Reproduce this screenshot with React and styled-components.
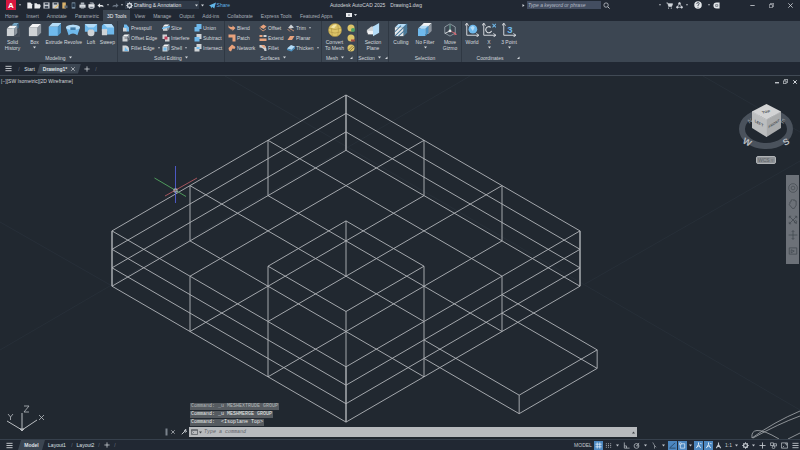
// src/App.jsx
import React from 'react';
import styled, { createGlobalStyle } from 'styled-components';

const GlobalStyle = createGlobalStyle`
  * {
    box-sizing: border-box;
  }

  body {
    margin: 0;
    background: #212830;
    color: #d3d7dc;
    font-family: "Liberation Sans", Arial, sans-serif;
    font-size: 5px;
    line-height: 6px;
  }

  button, input, select {
    margin: 0;
    padding: 0;
    border: 0;
    background: none;
    color: inherit;
    font: inherit;
  }

  svg {
    display: block;
    flex: none;
  }
`;

const BLUE = '#6fb9ec';
const PALE = '#b4dcf7';
const GREY = '#cfd3d6';
const DARK = '#8d959e';
const ORANGE = '#e8a27c';
const GOLD = '#dcc468';

/* ---------- icons ---------- */

const Svg = ({ size = 8, w, h, box = '0 0 16 16', children, ...rest }) => (
  <svg width={w || size} height={h || size} viewBox={box} fill="none" stroke="currentColor" strokeWidth="1.6" aria-hidden="true" {...rest}>
    {children}
  </svg>
);

const Caret = ({ size = 3 }) => (
  <Svg size={size} box="0 0 6 6" stroke="none"><path d="M0 1h6L3 5z" fill="currentColor" /></Svg>
);

const Launcher = () => (
  <Svg size={3} box="0 0 6 6" stroke="none"><path d="M0 6h5V1z" fill="currentColor" /></Svg>
);

const Cube = ({ x = 0, y = 0, s = 1, top = '#f2f3f4', left = GREY, right = DARK }) => (
  <g transform={`translate(${x} ${y}) scale(${s})`} stroke="none">
    <path d="M0 4L4 0H14L10 4z" fill={top} />
    <path d="M0 4H10V14H0z" fill={left} />
    <path d="M10 4L14 0V10L10 14z" fill={right} />
  </g>
);

const big = {
  history: (
    <>
      <Cube x={7} y={0} s={0.55} top="#76a9c9" left="#51809f" right="#38617f" />
      <Cube x={1} y={3} s={0.85} />
      <path d="M13 7h2v8H9" stroke="#4b525c" />
    </>
  ),
  box: <Cube x={1} y={1} />,
  extrude: <Cube x={2} y={0} s={1.05} top={PALE} left={BLUE} right="#4b91c2" />,
  revolve: (
    <g stroke="none">
      <path d="M0 5Q8 -1 16 5L13 14Q8 10 3 14z" fill={BLUE} />
      <ellipse cx="8" cy="5" rx="8" ry="3" fill={PALE} />
      <path d="M5 5h6v3H5z" fill="#437fab" />
    </g>
  ),
  loft: (
    <g stroke="none">
      <path d="M1 1h14v9h-4L8 7l-3 3H1z" fill={BLUE} />
      <path d="M1 1h14l-4 4H5z" fill={PALE} />
      <circle cx="8" cy="11" r="4" fill={GREY} />
    </g>
  ),
  sweep: (
    <g stroke="none">
      <path d="M3 1h9l3 4v8H7V9H1V3z" fill={BLUE} />
      <path d="M3 1h9l3 4H7L5 3z" fill={PALE} />
      <path d="M1 7h6v7H1z" fill={GREY} />
    </g>
  ),
  mesh: (
    <g stroke="#a98f42" strokeWidth=".6">
      <circle cx="8" cy="8" r="7.5" fill={GOLD} />
      <path d="M1 6Q8 9 15 6M1 10Q8 13 15 10M5 1Q3 8 5 15M11 1Q13 8 11 15" />
      <path d="M3 5Q6 1 10 2L7 6z" fill="#f3e6a6" stroke="none" />
    </g>
  ),
  section: (
    <g stroke="none">
      <path d="M1 8L6 4h5v7H1z" fill={GREY} />
      <path d="M8 4L15 0V11L8 15z" fill={PALE} />
      <path d="M2 9h6v4H2z" fill="#f2f3f4" />
    </g>
  ),
  culling: (
    <>
      <Cube x={1} y={1} top={PALE} left="#e6e9eb" right="#4c7a99" />
      <path d="M1 15L15 1M1 10L8 3M5 15L15 6" stroke="#487a9c" strokeWidth="1.2" />
    </>
  ),
  filter: (
    <>
      <Cube x={3} y={0} s={0.9} />
      <Cube x={0} y={3} s={0.85} top={PALE} left={BLUE} right="#4b91c2" />
    </>
  ),
  gizmo: (
    <g strokeWidth="1">
      <path d="M8 1L14 4.500V11.500L8 15L2 11.500V4.500z" stroke="#95a0a9" />
      <path d="M8 9V2" stroke="#77bfa8" />
      <path d="M8 9L2 12" stroke="#e5e7e9" />
      <path d="M8 9L14 12" stroke="#d36b75" />
      <circle cx="8" cy="9" r="1.600" fill="#e5e7e9" stroke="none" />
      <path d="M13 10l3 3-3 1z" fill="#d36b75" stroke="none" />
    </g>
  ),
  world: (
    <>
      <path d="M2 1V14H15M0 3L2 0l2 3M13 12l3 2-3 2" strokeWidth="1.100" />
      <circle cx="9" cy="7" r="5" fill={BLUE} stroke="none" />
      <path d="M6 5l3-2 2 2-2 4z" fill={PALE} stroke="none" />
    </>
  ),
  ucsX: (
    <>
      <path d="M2 1V14H15M0 3L2 0l2 3M13 12l3 2-3 2" strokeWidth="1.100" />
      <path d="M11 9a3.500 3.500 0 1 1-1-4" strokeWidth="1.300" />
      <path d="M12 1l4 4M16 1l-4 4" stroke={BLUE} strokeWidth="1.200" />
    </>
  ),
  point3: (
    <>
      <path d="M2 1V14H15M0 3L2 0l2 3M13 12l3 2-3 2" strokeWidth="1.100" />
      <text x="6" y="11" fontSize="11" fontWeight="bold" fill={BLUE} stroke="none">3</text>
    </>
  ),
};

const small = {
  press: <><path d="M2 7h8v8H2z" fill={GREY} stroke="none" /><path d="M4 1h5l5 6v8H9V8H4z" fill={BLUE} stroke="none" /></>,
  offset: <><Cube x={1} y={1} /><path d="M5 8h8v6" stroke="#4b525c" /></>,
  filletE: <><path d="M1 3h7q6 1 6 7v5H1z" fill={GREY} stroke="none" /><path d="M6 6l7 8H5z" fill={BLUE} stroke="none" /></>,
  slice: <><Cube x={2} y={1} s={0.9} /><path d="M0 9L16 5" stroke={BLUE} strokeWidth="3" /></>,
  interfere: <><path d="M1 1h9v9H1zM6 6h9v9H6z" fill={GREY} stroke="none" /><path d="M5 5h6v6H5z" fill="#c3415c" stroke="none" /></>,
  shell: <><Cube x={1} y={1} /><path d="M3 7h6v6H3z" fill={BLUE} stroke="none" /></>,
  union: <path d="M5 0h10v10h-4v5H1V6h4z" fill={BLUE} stroke="none" />,
  subtract: <><path d="M5 0h10v10H5z" fill={GREY} stroke="none" /><path d="M1 6h10v9H1z" fill={BLUE} stroke="none" /></>,
  intersect: <><path d="M5 0h10v10H5zM1 6h10v9H1z" fill={GREY} stroke="none" /><path d="M5 6h6v4H5z" fill={BLUE} stroke="none" /></>,
  blend: <path d="M1 1q0 5 6 5h2V3l6 5-6 6v-3H6L1 7z" fill={ORANGE} stroke="none" />,
  patch: <path d="M1 1h14v14h-6V7H1z" fill={ORANGE} stroke="none" />,
  network: <path d="M1 8L8 1l7 5-2 4-4-1-3 6-4-2z" fill={ORANGE} stroke="none" />,
  offsetS: <><path d="M2 6l7-5 6 4-6 5z" fill={ORANGE} stroke="none" /><path d="M1 8l7 6 6-4" stroke={ORANGE} /></>,
  extend: <><path d="M1 2h6v4H1zM1 9h14v5H1z" fill={ORANGE} stroke="none" /><path d="M9 2h6v4H9z" fill={GREY} stroke="none" /></>,
  fillet: <><path d="M1 2h8q6 1 6 12h-4Q10 7 1 7z" fill={GREY} stroke="none" /><path d="M4 2h5q4 1 5 5l-4 1z" fill={ORANGE} stroke="none" /></>,
  trim: <><path d="M2 8l6-7 6 6-6 2z" fill={GREY} stroke="none" /><path d="M1 10l5 5M5 9l9 5" stroke={ORANGE} /></>,
  planar: <path d="M1 12L6 4h9l-5 8z" fill={ORANGE} stroke="none" />,
  thicken: <><path d="M0 9l8-7 8 3-7 7z" fill={PALE} stroke="none" /><path d="M0 9l9 3 7-7v4l-7 6-9-3z" fill="#4b91c2" stroke="none" /></>,
  more: <><circle cx="8" cy="8" r="7" fill={GOLD} stroke="none" /><circle cx="12" cy="12" r="4" fill="#4e9f63" stroke="none" /></>,
  less: <><circle cx="8" cy="8" r="7" fill={GOLD} stroke="none" /><path d="M8 11h8v4H8z" fill="#a34b42" stroke="none" /></>,
  refine: <><circle cx="8" cy="8" r="7" fill={GOLD} stroke="none" /><path d="M3 12L12 3M6 14l8-8" stroke="#7b6b3b" strokeWidth="1.500" /></>,
};

const quick = {
  new: <path d="M3 1h7l4 4v10H3z" fill="#e9ebee" stroke="none" />,
  open: <path d="M1 3h5l2 2h6v3h2l-3 7H1z" fill="#e9ebee" stroke="none" />,
  save: <><path d="M1 1h14v14H1z" fill="#c9ced4" stroke="none" /><path d="M4 2h8v4H4zM4 9h8v5H4z" fill="#46505e" stroke="none" /></>,
  saveAs: <><path d="M1 1h14v14H1z" fill="#c9ced4" stroke="none" /><path d="M4 2h8v4H4z" fill="#46505e" stroke="none" /><path d="M6 14l9-8" stroke="#e4bd68" strokeWidth="3" /></>,
  web: <><path d="M3 1h8v14H3z" fill="#d9b26b" stroke="none" /><path d="M8 8h7v6H8z" fill="#5c6774" stroke="none" /></>,
  mobile: <><path d="M4 1h8v14H4z" fill="#8ba2b5" stroke="none" /><path d="M5 3h6v9H5z" fill="#243447" stroke="none" /></>,
  plot: <><path d="M1 6h14v7H1z" fill="#d9dde1" stroke="none" /><path d="M4 1h8v5H4zM4 10h8v5H4z" fill="#aab1b9" stroke="none" /></>,
  print: <><path d="M1 5h14v8H1z" fill="#e9ebee" stroke="none" /><path d="M4 2h8v3M4 10h8v5H4z" fill="#6d7682" /></>,
  undo: <path d="M1 8l6-5v4h4q4 0 4 5-2-2-4-2H7v3z" fill="#e9ebee" stroke="none" />,
  redo: <path d="M15 8L9 3v4H5q-4 0-4 5 2-2 4-2h4v3z" fill="#6b7684" stroke="none" />,
};

const status = {
  grid: <path d="M1 5h14M1 11h14M5 1v14M11 1v14" strokeWidth="1.800" />,
  snap: <path d="M2 4h12M2 8h12M2 12h12" strokeDasharray="2 3" strokeWidth="2" />,
  ortho: <path d="M3 1v13h12M3 9h5v5" />,
  polar: <><circle cx="8" cy="9" r="5.500" /><path d="M8 9l6-7M8 9h5" /></>,
  iso: <path d="M4 1l4 7v7M8 8l4 4" strokeWidth="1.300" />,
  track: <path d="M1 14h14M2 13L14 2" stroke="#20384f" />,
  osnap: <><path d="M3 4h10v10H3z" /><path d="M1 2h4v4H1z" fill="#2b5f95" /></>,
  annoA: <path d="M8 1v5L3 14M8 6l5 8M8 10H5M12 2l3 3" strokeWidth="2.200" />,
  anno: <path d="M8 1v5L3 14M8 6l5 8M7 10h2" strokeWidth="2.400" />,
  gear: <><circle cx="8" cy="8" r="4.500" strokeWidth="3" /><path d="M8 0v16M0 8h16M2.500 2.500l11 11M13.500 2.500l-11 11" strokeDasharray="3 10" /></>,
  plus: <path d="M8 1v14M1 8h14" strokeWidth="2" />,
  isolate: <><path d="M1 2h7v6H1zM9 4h6v5H9z" /><circle cx="8" cy="12" r="3" /></>,
  clean: <><path d="M1 2h14v12H1z" /><path d="M9 4h4v4M4 12l3-3" /></>,
  menu: <path d="M1 3h14M1 8h14M1 13h14" strokeWidth="2" />,
};

/* ---------- page ---------- */

const Page = styled.div`
  display: flex;
  flex-direction: column;
  min-height: 100vh;
  background: #212830;
`;

const IconButton = styled.button`
  display: flex;
  align-items: center;
  justify-content: center;
  width: ${({ $w }) => $w || 10}px;
  height: 9px;
`;

const TitleBar = styled.header`
  display: flex;
  align-items: center;
  height: 10px;
  background: #212833;
`;

const QuickAccess = styled.div`
  display: flex;
  align-items: center;
  width: 230px;
  padding-left: 6px;
`;

const Logo = styled.button`
  width: 10px;
  height: 10px;
  background: #d8173f;
  color: #fff;
  font-size: 8px;
  font-weight: bold;
  line-height: 9px;
`;

const Workspace = styled.label`
  display: flex;
  align-items: center;
  gap: 1px;
  width: 75px;
  height: 8px;
  padding: 0 1px;
  background: #303a48;

  select {
    flex: 1;
    height: 8px;
    appearance: none;
    color: #e1e4e8;
  }
`;

const Share = styled.button`
  display: flex;
  align-items: center;
  gap: 1px;
  margin-left: 2px;
  color: #62b5e8;
`;

const AppTitle = styled.h1`
  display: flex;
  flex: 1;
  justify-content: center;
  gap: 5px;
  margin: 0;
  font-size: 5px;
  font-weight: normal;
  white-space: nowrap;
`;

const Search = styled.form`
  display: flex;
  align-items: center;
  gap: 2px;
  width: 90px;

  input {
    width: 74px;
    height: 8px;
    padding: 0 1px;
    background: #434d60;
    font-style: italic;
  }

  input::placeholder {
    color: #b3bac5;
    opacity: 1;
  }
`;

const Account = styled.div`
  display: flex;
  align-items: center;
  width: 188px;
  padding-left: 43px;
`;

const WindowButtons = styled.div`
  display: flex;
  flex: 1;
  justify-content: flex-end;
`;

const Tabs = styled.nav`
  display: flex;
  align-items: stretch;
  height: 11px;
  padding-left: 1px;
  background: #212833;
`;

const Tab = styled.button`
  padding: 0 4px;
  color: ${({ $active }) => ($active ? '#eef0f2' : '#a9b0b9')};
  background: ${({ $active }) => ($active ? '#3c4652' : 'transparent')};
`;

const Ribbon = styled.section`
  display: flex;
  height: 41px;
  background: #3c4652;
`;

const Panel = styled.div`
  display: flex;
  flex-direction: column;
  width: ${({ $w }) => $w}px;
  border-right: 1px solid ${({ $last }) => ($last ? 'transparent' : '#2f3843')};
`;

const PanelTools = styled.div`
  display: grid;
  flex: 1;
  grid-template-columns: ${({ $cols }) => $cols};
  padding: 2px 0 0 ${({ $pad }) => $pad || 0}px;
`;

const PanelTitle = styled.div`
  display: flex;
  align-items: center;
  justify-content: center;
  gap: 3px;
  height: 8px;
  padding-bottom: 1px;

  svg:last-child {
    margin-left: ${({ $launch }) => $launch || 0}px;
  }
`;

const BigButton = styled.button`
  display: flex;
  flex-direction: column;
  align-items: center;
  gap: 1px;
  color: #d6dade;
  text-align: center;

  span {
    margin-top: 1px;
  }
`;

const SmallStack = styled.div`
  display: flex;
  flex-direction: column;
`;

const SmallButton = styled.button`
  display: flex;
  align-items: center;
  gap: 1px;
  height: 10px;
  color: #d6dade;
  white-space: nowrap;

  svg + svg {
    margin-left: 2px;
  }
`;

const FileTabs = styled.nav`
  display: flex;
  align-items: center;
  height: 14px;
  border-bottom: 1px solid #414a55;
  background: #212833;
`;

const FileTab = styled.button`
  display: flex;
  align-items: center;
  justify-content: center;
  gap: 4px;
  width: ${({ $w }) => $w}px;
  height: 10px;
  color: #dfe2e6;
  font-weight: ${({ $active }) => ($active ? 'bold' : 'normal')};
  background: ${({ $active }) => ($active ? '#3c4652' : 'transparent')};
  clip-path: ${({ $active }) => ($active ? 'polygon(3px 0, 100% 0, calc(100% - 3px) 100%, 0 100%)' : 'none')};
`;

const Slash = styled.span`
  width: ${({ $w }) => $w || 6}px;
  color: #6b7582;
  text-align: center;
`;

const Viewport = styled.main`
  position: relative;
  flex: 1;
  min-height: 300px;
  overflow: hidden;
`;

const Drawing = styled.svg`
  position: absolute;
  inset: 0;
  width: 100%;
  height: 100%;
`;

const ViewLabel = styled.div`
  position: absolute;
  top: 2px;
  left: 1px;
`;

const DocButtons = styled.div`
  position: absolute;
  top: 1px;
  right: 1px;
  display: flex;
`;

const Compass = styled.div`
  position: absolute;
  top: 26px;
  right: 6px;
  display: flex;
  flex-direction: column;
  align-items: center;
  gap: 6px;
`;

const Wcs = styled.button`
  width: 20px;
  height: 8px;
  border: 1px solid #b0b3b6;
  border-radius: 2px;
  background: #8e9296;
  color: #5d6267;
`;

const NavBar = styled.div`
  position: absolute;
  top: 99px;
  right: 1px;
  display: flex;
  flex-direction: column;
  align-items: center;
  justify-content: space-between;
  width: 13px;
  height: 89px;
  padding: 8px 0;
  background: #6c7178;
  color: #42484f;
`;

const CommandArea = styled.div`
  position: absolute;
  right: 163px;
  bottom: 2px;
  left: 165px;
`;

const History = styled.div`
  display: flex;
  flex-direction: column;
  align-items: flex-start;
  gap: 1px;
  margin: 0 0 1px 25px;
  font-family: "Liberation Mono", monospace;
`;

const HistoryLine = styled.div`
  height: 7px;
  padding: 0 1px;
  background: #565b60;
  color: ${({ $dim }) => ($dim ? '#b4b8bb' : '#e8eaeb')};
  white-space: pre;
`;

const CommandRow = styled.div`
  display: flex;
  align-items: center;
  height: 10px;
`;

const CommandBox = styled.label`
  display: flex;
  flex: 1;
  align-items: center;
  gap: 1px;
  height: 10px;
  padding: 0 2px;
  background: #b8bbbe;
  color: #41464b;

  input {
    flex: 1;
    height: 8px;
    padding: 0 1px;
    font-family: "Liberation Mono", monospace;
    font-style: italic;
  }

  input::placeholder {
    color: #5f6469;
    opacity: 1;
  }
`;

const StatusBar = styled.footer`
  display: flex;
  align-items: center;
  height: 11px;
  border-top: 1px solid #36404c;
  background: #212833;
`;

const StatusTools = styled.div`
  display: flex;
  align-items: center;
  gap: 1px;
  margin-left: auto;
`;

const StatusButton = styled.button`
  display: flex;
  align-items: center;
  justify-content: center;
  width: ${({ $w }) => $w || 9}px;
  height: 9px;
  color: ${({ $on }) => ($on ? '#e6f1fb' : '#c3c8ce')};
  background: ${({ $on }) => ($on ? '#4c87c0' : 'transparent')};
`;

function Big({ icon, label, caret }) {
  return (
    <BigButton type="button">
      <Svg size={14}>{big[icon]}</Svg>
      <span>{label}</span>
      {caret && <Caret />}
    </BigButton>
  );
}

function Small({ icon, label, caret }) {
  return (
    <SmallButton type="button" aria-label={label || icon}>
      <Svg>{small[icon]}</Svg>
      {label}
      {caret && <Caret size={2} />}
    </SmallButton>
  );
}

function Title({ children, caret, launch }) {
  return (
    <PanelTitle $launch={launch}>
      {children}
      {caret && <Caret />}
      {launch && <Launcher />}
    </PanelTitle>
  );
}

/* ---------- wireframe ---------- */

// u runs down-right, v runs down-left, z is depth below the top face
const LEVELS = [0, 18.4, 36.9, 55.3];
const pt = (u, v, z = 0) => [346 + (u - v) * 78, 95 + (u + v) * 45.3 + z];
const seg = (a, b) => `M${a.join(' ')}L${b.join(' ')}`;

function buildModel() {
  const out = [];
  LEVELS.forEach((z, i) => {
    const rows = i === 0 || i === 3 ? [0, 1, 2, 3] : [0, 3];
    rows.forEach((n) => {
      out.push(seg(pt(n, 0, z), pt(n, 3, z)));
      out.push(seg(pt(0, n, z), pt(3, n, z)));
    });
  });
  for (let n = 0; n <= 3; n += 1) {
    [[n, 0], [n, 3], [0, n], [3, n]].forEach(([u, v]) => {
      out.push(seg(pt(u, v, 0), pt(u, v, 55.3)));
    });
  }
  // raised corner block
  const up = -55.3;
  const corners = [[2, 2], [3, 2], [3, 3], [2, 3]];
  corners.forEach(([u, v], i) => {
    const [nu, nv] = corners[(i + 1) % 4];
    out.push(seg(pt(u, v, up), pt(nu, nv, up)));
    out.push(seg(pt(u, v, up), pt(u, v, 0)));
  });
  // side plank
  const end = 4.22;
  [18.4, 36.9].forEach((z) => {
    out.push(seg(pt(3, 1, z), pt(end, 1, z)));
    out.push(seg(pt(3, 2, z), pt(end, 2, z)));
    out.push(seg(pt(end, 1, z), pt(end, 2, z)));
  });
  out.push(seg(pt(end, 1, 18.4), pt(end, 1, 36.9)));
  out.push(seg(pt(end, 2, 18.4), pt(end, 2, 36.9)));
  return out.join('');
}

const MODEL = buildModel();

function Wireframe() {
  return (
    <Drawing viewBox="0 76 800 363" preserveAspectRatio="xMidYMid slice" fill="none">
      <path
        d="M470 76L0 350M225 76L800 410M585 284L800 161M703 76L800 132M0 222L112 286"
        stroke="#272f38"
      />
      <path d={MODEL} stroke="#b2b6ba" strokeWidth=".9" />
      <path d="M175.500 166V203" stroke="#4c58c4" />
      <path d="M154.500 178L186 196.500" stroke="#4f9a5c" />
      <path d="M165 196L197 178" stroke="#a5555d" />
      <path d="M174 189h3v3h-3z" stroke="#c9ccd0" strokeWidth=".8" />
      <g stroke="#b9bdc1">
        <path d="M22 413V430M22 430L7 421M22 430L37 420M20 429h4l-2 2z" />
        <path d="M24 406h5l-5 6h5M8 414l2.500 3 2.500-3M10.500 417v3M39 415l5 5M44 415l-5 5" strokeWidth=".8" />
      </g>
      <path
        d="M752 438Q751 431 757 430.500Q764 430 779 439M752 438Q774 422 800 411M753 438Q778 424 800 416M788 439L800 433"
        stroke="#a8acb0"
        strokeWidth=".8"
      />
    </Drawing>
  );
}

function ViewCube() {
  return (
    <svg width="56" height="48" viewBox="738 102 56 48" fontFamily="Liberation Sans" fontWeight="bold">
      <ellipse cx="766" cy="129" rx="24" ry="17" fill="none" stroke="#4a525c" strokeWidth="6" />
      <text x="748" y="123" fontSize="6" fill="#848a91" transform="rotate(-30 750 121)">N</text>
      <text x="781" y="123" fontSize="6" fill="#848a91" transform="rotate(30 783 121)">E</text>
      <text x="743" y="145" fontSize="9" fill="#b9bdc1" transform="rotate(28 747 142)">W</text>
      <text x="783" y="145" fontSize="9" fill="#b9bdc1" transform="rotate(-30 786 142)">S</text>
      <path d="M766.500 104L781 111.500L766.500 119.500L752 111.500z" fill="#d2d3d4" />
      <path d="M752 111.500L766.500 119.500V137L752 128z" fill="#bcbebf" />
      <path d="M781 111.500L766.500 119.500V137L781 128z" fill="#a9abac" />
      <path d="M752 111.500L766.500 119.500L781 111.500M766.500 119.500V137" stroke="#e4e5e6" strokeWidth=".5" fill="none" />
      <text fontSize="4" fill="#50555a" textAnchor="middle" transform="matrix(1 -.2 .3 .8 766.500 113)">TOP</text>
      <text fontSize="4" fill="#50555a" textAnchor="middle" transform="matrix(.87 .5 0 1 759 124.500)">LEFT</text>
      <text fontSize="4" fill="#50555a" textAnchor="middle" transform="matrix(.8 -.5 0 1 774 125)">FRONT</text>
    </svg>
  );
}

const TAB_NAMES = [
  'Home', 'Insert', 'Annotate', 'Parametric', '3D Tools', 'View', 'Manage',
  'Output', 'Add-ins', 'Collaborate', 'Express Tools', 'Featured Apps',
];

const QUICK = ['new', 'open', 'save', 'saveAs', 'web', 'mobile', 'plot', 'print'];

// name, width, switched on
const STATUS_ITEMS = [
  ['grid', 9, true], ['snap'], ['caret', 7], ['ortho'], ['polar'], ['caret', 7],
  ['iso'], ['caret', 7], ['track', 9, true], ['osnap', 9, true], ['caret', 5],
  ['annoA', 9, true], ['annoA', 9, true], ['anno'], ['scale'], ['caret', 5],
  ['gear', 10], ['caret', 5], ['plus', 10], ['isolate', 10], ['clean', 10], ['menu', 10],
];

export default function App() {
  return (
    <Page>
      <GlobalStyle />
      <TitleBar>
        <QuickAccess>
          <Logo type="button">A</Logo>
          <IconButton type="button" $w={9} aria-label="Application menu"><Caret size={2} /></IconButton>
          {QUICK.map((name) => (
            <IconButton key={name} type="button" $w={9} aria-label={name}>
              <Svg size={7}>{quick[name]}</Svg>
            </IconButton>
          ))}
          <IconButton type="button" aria-label="Undo"><Svg size={7}>{quick.undo}</Svg></IconButton>
          <IconButton type="button" $w={5} aria-label="Undo list"><Caret size={2} /></IconButton>
          <IconButton type="button" aria-label="Redo"><Svg size={7}>{quick.redo}</Svg></IconButton>
          <IconButton type="button" $w={5} aria-label="Redo list"><Caret size={2} /></IconButton>
          <Workspace>
            <Svg size={7}>{status.gear}</Svg>
            <select aria-label="Workspace">
              <option>Drafting &amp; Annotation</option>
            </select>
            <Caret />
          </Workspace>
          <IconButton type="button" $w={8} aria-label="Customize toolbar"><Caret /></IconButton>
          <Share type="button">
            <Svg size={7}><path d="M0 8L16 1l-4 14-5-4-2 4-1-5z" fill="currentColor" stroke="none" /></Svg>
            Share
          </Share>
        </QuickAccess>
        <AppTitle>
          <span>Autodesk AutoCAD 2025</span>
          <span>Drawing1.dwg</span>
        </AppTitle>
        <Search>
          <Svg size={3} box="0 0 6 6" stroke="none"><path d="M1 0l4 3-4 3z" fill="currentColor" /></Svg>
          <input aria-label="Search help" placeholder="Type a keyword or phrase" />
          <Svg size={7}><circle cx="7" cy="7" r="5" /><path d="M11 11l4 4" strokeWidth="2" /></Svg>
        </Search>
        <Account>
          <IconButton type="button" $w={9} aria-label="Sign in list"><Caret size={2} /></IconButton>
          <IconButton type="button" aria-label="Store">
            <Svg size={7}><path d="M1 2h3l2 8h7l2-6H5" fill="currentColor" /><path d="M5 14h2M11 14h2" strokeWidth="2.500" /></Svg>
          </IconButton>
          <IconButton type="button" aria-label="Apps">
            <Svg size={7}><path d="M8 2L3 12h10z" /><circle cx="8" cy="3" r="2" fill="currentColor" /><circle cx="3" cy="12" r="2" fill="currentColor" /><circle cx="13" cy="12" r="2" fill="currentColor" /></Svg>
          </IconButton>
          <IconButton type="button" $w={5} aria-label="Apps list"><Caret size={2} /></IconButton>
          <IconButton type="button" $w={18} aria-label="Help">
            <Svg size={8}><circle cx="8" cy="8" r="7.500" fill="#e3e6e9" stroke="none" /><path d="M5.500 6q0-3 2.500-3t2.500 2.500Q10.500 7 8 8v2M8 11.500v2" stroke="#323b47" /></Svg>
          </IconButton>
          <IconButton type="button" $w={3} aria-label="Help list"><Caret size={2} /></IconButton>
          <IconButton type="button" $w={13} aria-label="Feedback">
            <Svg size={7}><path d="M8 1a7 7 0 1 0 0 14h7V1z" fill="#e3e6e9" stroke="none" /><path d="M6 6h5v4H6z" stroke="#5b6470" /></Svg>
          </IconButton>
          <WindowButtons>
            <IconButton type="button" $w={19} aria-label="Minimize"><Svg size={5}><path d="M1 8h14" strokeWidth="2.500" /></Svg></IconButton>
            <IconButton type="button" $w={19} aria-label="Restore"><Svg size={5}><path d="M1 5h10v10H1zM5 4V1h10v10h-3" strokeWidth="2" /></Svg></IconButton>
            <IconButton type="button" $w={19} aria-label="Close"><Svg size={5}><path d="M1 1l14 14M15 1L1 15" strokeWidth="2.500" /></Svg></IconButton>
          </WindowButtons>
        </Account>
      </TitleBar>

      <Tabs>
        {TAB_NAMES.map((name) => (
          <Tab key={name} type="button" $active={name === '3D Tools'}>{name}</Tab>
        ))}
        <IconButton type="button" $w={30} aria-label="Ribbon display">
          <Svg w={11} h={4} box="0 0 22 8" stroke="none">
            <path d="M0 0h12v8H0z" fill="#e9ebee" />
            <path d="M4 5l2-3 2 3z" fill="#46505e" />
            <path d="M16 2h6l-3 4z" fill="currentColor" />
          </Svg>
        </IconButton>
      </Tabs>

      <Ribbon>
        <Panel $w={118}>
          <PanelTools $cols="23px 21px 18px 20px 16px 17px" $pad={1}>
            <Big icon="history" label={<>Solid<br />History</>} />
            <Big icon="box" label="Box" caret />
            <Big icon="extrude" label="Extrude" />
            <Big icon="revolve" label="Revolve" />
            <Big icon="loft" label="Loft" />
            <Big icon="sweep" label="Sweep" />
          </PanelTools>
          <Title caret>Modeling</Title>
        </Panel>
        <Panel $w={107}>
          <PanelTools $cols="40px 32px 30px" $pad={4}>
            <SmallStack>
              <Small icon="press" label="Presspull" />
              <Small icon="offset" label="Offset Edge" />
              <Small icon="filletE" label="Fillet Edge" caret />
            </SmallStack>
            <SmallStack>
              <Small icon="slice" label="Slice" />
              <Small icon="interfere" label="Interfere" />
              <Small icon="shell" label="Shell" caret />
            </SmallStack>
            <SmallStack>
              <Small icon="union" label="Union" />
              <Small icon="subtract" label="Subtract" />
              <Small icon="intersect" label="Intersect" />
            </SmallStack>
          </PanelTools>
          <Title caret>Solid Editing</Title>
        </Panel>
        <Panel $w={97}>
          <PanelTools $cols="31px 28px 34px" $pad={3}>
            <SmallStack>
              <Small icon="blend" label="Blend" />
              <Small icon="patch" label="Patch" />
              <Small icon="network" label="Network" />
            </SmallStack>
            <SmallStack>
              <Small icon="offsetS" label="Offset" />
              <Small icon="extend" label="Extend" />
              <Small icon="fillet" label="Fillet" />
            </SmallStack>
            <SmallStack>
              <Small icon="trim" label="Trim" caret />
              <Small icon="planar" label="Planar" />
              <Small icon="thicken" label="Thicken" caret />
            </SmallStack>
          </PanelTools>
          <Title caret>Surfaces</Title>
        </Panel>
        <Panel $w={36}>
          <PanelTools $cols="25px 9px">
            <Big icon="mesh" label={<>Convert<br />To Mesh</>} />
            <SmallStack>
              <Small icon="more" />
              <Small icon="less" />
              <Small icon="refine" />
            </SmallStack>
          </PanelTools>
          <Title caret launch={3}>Mesh</Title>
        </Panel>
        <Panel $w={31}>
          <PanelTools $cols="1fr">
            <Big icon="section" label={<>Section<br />Plane</>} />
          </PanelTools>
          <Title caret launch={1}>Section</Title>
        </Panel>
        <Panel $w={73}>
          <PanelTools $cols="24px 24px 26px">
            <Big icon="culling" label="Culling" />
            <Big icon="filter" label="No Filter" caret />
            <Big icon="gizmo" label={<>Move<br />Gizmo</>} />
          </PanelTools>
          <Title>Selection</Title>
        </Panel>
        <Panel $w={74} $last>
          <PanelTools $cols="18px 16px 24px" $pad={1}>
            <Big icon="world" label="World" />
            <Big icon="ucsX" label="X" caret />
            <Big icon="point3" label="3 Point" caret />
          </PanelTools>
          <Title launch={11}>Coordinates</Title>
        </Panel>
      </Ribbon>

      <FileTabs>
        <IconButton type="button" $w={16} aria-label="Files"><Svg size={7}>{status.menu}</Svg></IconButton>
        <Slash>/</Slash>
        <FileTab type="button" $w={15}>Start</FileTab>
        <FileTab type="button" $w={44} $active>
          Drawing1*
          <Svg size={4}><path d="M1 1l14 14M15 1L1 15" strokeWidth="2.500" /></Svg>
        </FileTab>
        <IconButton type="button" $w={12} aria-label="New drawing"><Svg size={6}>{status.plus}</Svg></IconButton>
        <Slash>/</Slash>
      </FileTabs>

      <Viewport>
        <Wireframe />
        <ViewLabel>[−][SW Isometric][2D Wireframe]</ViewLabel>
        <DocButtons>
          <IconButton type="button" $w={9} aria-label="Minimize drawing"><Svg size={4}><path d="M0 11h16" strokeWidth="5" /></Svg></IconButton>
          <IconButton type="button" $w={9} aria-label="Restore drawing"><Svg size={5}><path d="M1 6h9v9H1zM5 4V1h10v10h-3" strokeWidth="2.500" /></Svg></IconButton>
          <IconButton type="button" $w={9} aria-label="Close drawing"><Svg size={4}><path d="M1 1l14 14M15 1L1 15" strokeWidth="4" /></Svg></IconButton>
        </DocButtons>
        <Compass>
          <ViewCube />
          <Wcs type="button">WCS ▿</Wcs>
        </Compass>
        <NavBar>
          <Svg size={10} strokeWidth="1"><circle cx="8" cy="8" r="7" /><circle cx="8" cy="8" r="3" /></Svg>
          <Svg size={10} strokeWidth="1.200"><path d="M3 8V5l2-1V2l2-1 1 1 2-1 1 2 2 0v7l-3 5H7L2 9z" /></Svg>
          <Svg size={10} strokeWidth="1.200"><path d="M2 2l12 12M14 2L2 14M2 5V2h3M11 2h3v3M2 11v3h3" /><circle cx="12" cy="11" r="2" /></Svg>
          <Svg size={10} strokeWidth="1.200"><path d="M8 1v14M1 8h14M6 3l2-2 2 2M6 13l2 2 2-2" /></Svg>
          <Svg size={10} strokeWidth="1.200"><path d="M2 3h12v10H2zM5 6l5 2-5 3z" /></Svg>
        </NavBar>
        <CommandArea>
          <History>
            <HistoryLine $dim>Command: _u MESHEXTRUDE GROUP</HistoryLine>
            <HistoryLine>Command: _u MESHMERGE GROUP</HistoryLine>
            <HistoryLine>{'Command:  <Isoplane Top>'}</HistoryLine>
          </History>
          <CommandRow>
            <Svg w={3} h={8} box="0 0 6 16"><path d="M3 1v14" stroke="#7b838c" strokeWidth="4" /></Svg>
            <IconButton type="button" aria-label="Close command line"><Svg size={4}><path d="M1 1l14 14M15 1L1 15" strokeWidth="2.500" /></Svg></IconButton>
            <IconButton type="button" $w={11} aria-label="Customize"><Svg size={6}><path d="M2 14l7-7M9 7q-1-4 4-6l-1 4 3 1q-2 4-6 1" strokeWidth="2.500" /></Svg></IconButton>
            <CommandBox>
              <Svg w={7} h={6} box="0 0 14 12"><path d="M1 1h12v10H1zM1 3h12M3 5l2 2-2 2" strokeWidth="1.200" /></Svg>
              <Caret />
              <input aria-label="Command" placeholder="Type a command" />
              <Svg size={3} box="0 0 6 6" stroke="none"><path d="M0 5h6L3 1z" fill="currentColor" /></Svg>
            </CommandBox>
          </CommandRow>
        </CommandArea>
      </Viewport>

      <StatusBar>
        <IconButton type="button" $w={18} aria-label="Layouts"><Svg size={7}>{status.menu}</Svg></IconButton>
        <FileTab type="button" $w={27} $active>Model</FileTab>
        <FileTab type="button" $w={24}>Layout1</FileTab>
        <Slash>/</Slash>
        <FileTab type="button" $w={21}>Layout2</FileTab>
        <Slash>/</Slash>
        <IconButton type="button" aria-label="New layout"><Svg size={6}>{status.plus}</Svg></IconButton>
        <Slash>/</Slash>
        <StatusTools>
          <StatusButton type="button" $w={20}>MODEL</StatusButton>
          {STATUS_ITEMS.map(([name, w, on], i) => (
            <StatusButton key={`${name}${i}`} type="button" $w={w} $on={on} aria-label={name}>
              {name === 'caret' && <Caret />}
              {name === 'scale' && '1:1'}
              {status[name] && <Svg size={7}>{status[name]}</Svg>}
            </StatusButton>
          ))}
        </StatusTools>
      </StatusBar>
    </Page>
  );
}
